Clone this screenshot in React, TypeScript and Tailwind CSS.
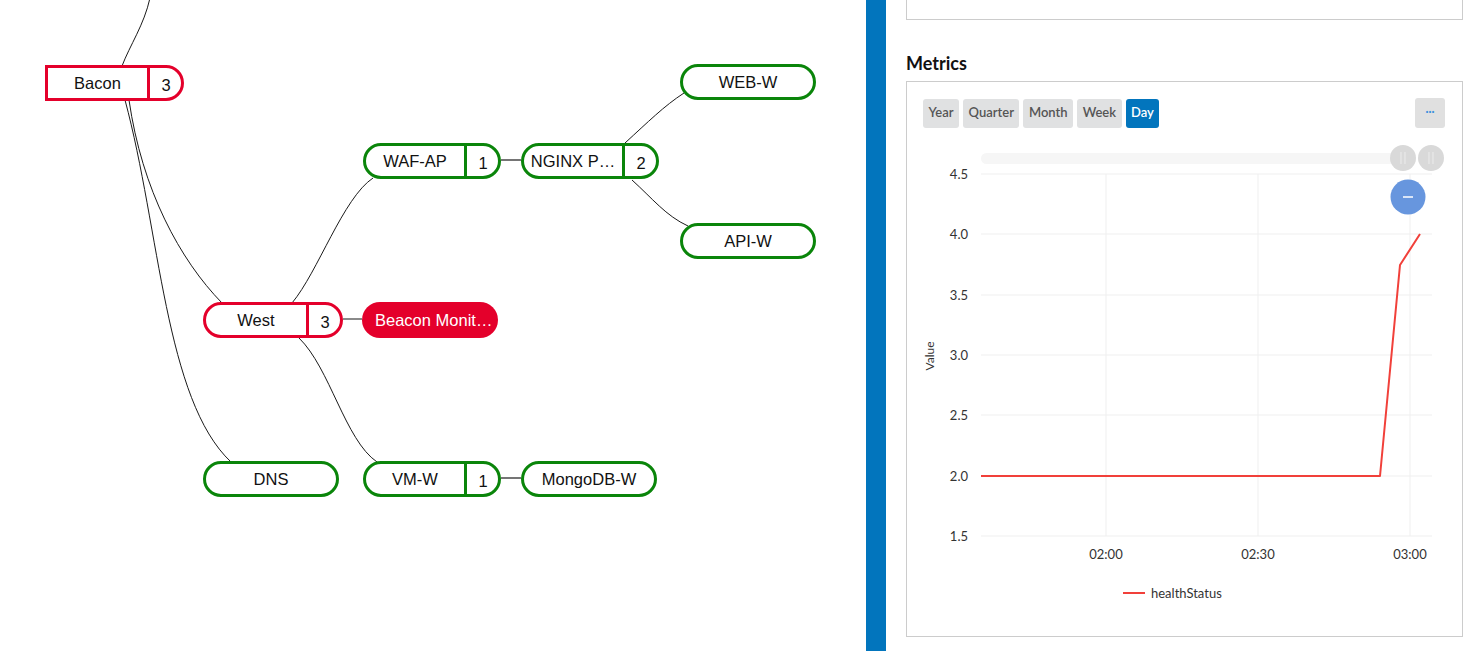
import React from "react";

type NodeDef = {
  label: string;
  count?: number;
  x: number;
  y: number;
  w: number;
  tone: "red" | "green" | "solid";
  square?: boolean;
};

const NODES: NodeDef[] = [
  { label: "Bacon", count: 3, x: 45, y: 65, w: 139, tone: "red", square: true },
  { label: "WEB-W", x: 680, y: 64, w: 136, tone: "green" },
  { label: "WAF-AP", count: 1, x: 363, y: 143, w: 138, tone: "green" },
  { label: "NGINX P…", count: 2, x: 521, y: 143, w: 138, tone: "green" },
  { label: "API-W", x: 680, y: 223, w: 136, tone: "green" },
  { label: "West", count: 3, x: 203, y: 302, w: 140, tone: "red" },
  { label: "Beacon Monit…", x: 362, y: 302, w: 136, tone: "solid" },
  { label: "DNS", x: 203, y: 461, w: 136, tone: "green" },
  { label: "VM-W", count: 1, x: 363, y: 461, w: 138, tone: "green" },
  { label: "MongoDB-W", x: 521, y: 461, w: 136, tone: "green" },
];

// edges of the topology, drawn under the nodes
const CURVES = [
  "M 150 -2 C 144 25, 130 45, 122 66",
  "M 129 100 C 142 190, 180 260, 222 303",
  "M 125 100 C 160 230, 165 400, 231 462",
  "M 292 303 C 318 272, 343 198, 373 178",
  "M 299 338 C 330 368, 345 440, 377 462",
  "M 625 143 C 648 122, 664 106, 684 93",
  "M 632 180 C 652 198, 666 216, 688 226",
];

const STRAIGHT = [
  { x1: 501, y1: 160, x2: 521, y2: 160, gray: false },
  { x1: 501, y1: 478, x2: 521, y2: 478, gray: false },
  { x1: 343, y1: 319, x2: 362, y2: 319, gray: true },
];

function TopoNode({ n }: { n: NodeDef }) {
  const base = "absolute flex h-[36px] font-['Liberation_Sans',Arial,sans-serif] text-[16.5px] leading-none";
  if (n.tone === "solid") {
    return (
      <div
        className={`${base} items-center rounded-full bg-[#e4002b] pl-[13px] pt-[1px] text-white`}
        style={{ left: n.x, top: n.y, width: n.w }}
      >
        <span className="whitespace-nowrap">{n.label}</span>
      </div>
    );
  }
  const red = n.tone === "red";
  return (
    <div
      className={`${base} items-stretch border-[3px] bg-white text-[#111] ${red ? "border-[#e4002b]" : "border-[#0a850a]"} ${n.square ? "rounded-r-full" : "rounded-full"}`}
      style={{ left: n.x, top: n.y, width: n.w }}
    >
      <div className="flex flex-1 items-center justify-center whitespace-nowrap pt-[1px]">{n.label}</div>
      {n.count !== undefined && (
        <div
          className={`flex w-[34px] items-center justify-center border-l-[3px] pt-[4px] pl-[1px] ${red ? "border-[#e4002b]" : "border-[#0a850a]"}`}
        >
          {n.count}
        </div>
      )}
    </div>
  );
}

const RANGES = ["Year", "Quarter", "Month", "Week", "Day"];
const Y_TICKS = [
  { v: "4.5", y: 46 },
  { v: "4.0", y: 106 },
  { v: "3.5", y: 167 },
  { v: "3.0", y: 227 },
  { v: "2.5", y: 287 },
  { v: "2.0", y: 348 },
  { v: "1.5", y: 408 },
];
const X_TICKS = [
  { v: "02:00", x: 199 },
  { v: "02:30", x: 351 },
  { v: "03:00", x: 503 },
];

function MetricsChart() {
  return (
    <svg width={555} height={508} className="block font-['Lato',sans-serif]">
      {/* zoom slider */}
      <rect x={74} y={25} width={420} height={11} rx={5.5} fill="#f6f6f6" />
      {[496, 524].map((cx) => (
        <g key={cx}>
          <circle cx={cx} cy={30} r={13} fill="#d9d9d9" />
          <line x1={cx - 2} y1={24} x2={cx - 2} y2={36} stroke="#ececec" strokeWidth={1} />
          <line x1={cx + 2} y1={24} x2={cx + 2} y2={36} stroke="#ececec" strokeWidth={1} />
        </g>
      ))}

      {/* grid */}
      {Y_TICKS.map((t) => (
        <line key={t.v} x1={74} y1={t.y} x2={525} y2={t.y} stroke="#efefef" />
      ))}
      {X_TICKS.map((t) => (
        <line key={t.v} x1={t.x} y1={46} x2={t.x} y2={408} stroke="#efefef" />
      ))}

      {/* reset zoom */}
      <circle cx={501} cy={69} r={17.5} fill="#6796de" />
      <line x1={496} y1={69} x2={506} y2={69} stroke="#fff" strokeWidth={1.5} />

      {/* axes labels */}
      {Y_TICKS.map((t) => (
        <text key={t.v} x={61} y={t.y + 4.5} textAnchor="end" fontSize={13} fill="#333">
          {t.v}
        </text>
      ))}
      {X_TICKS.map((t) => (
        <text key={t.v} x={t.x} y={431} textAnchor="middle" fontSize={13} fill="#333">
          {t.v}
        </text>
      ))}
      <text x={27} y={228} transform="rotate(-90 27 228)" textAnchor="middle" fontSize={12} fill="#333">
        Value
      </text>

      {/* series */}
      <polyline
        points="74,348 473,348 493,137 513,106"
        fill="none"
        stroke="#f1403a"
        strokeWidth={2}
        strokeLinejoin="round"
      />

      {/* legend */}
      <line x1={216} y1={465} x2={238} y2={465} stroke="#f1403a" strokeWidth={2} />
      <text x={244} y={469.5} fontSize={13} fill="#333">
        healthStatus
      </text>
    </svg>
  );
}

export default function App() {
  return (
    <div className="flex h-[651px] w-[1476px] overflow-hidden bg-white">
      {/* topology canvas */}
      <div className="relative h-full w-[866px] shrink-0 overflow-hidden bg-white">
        <svg className="absolute inset-0" width={866} height={651}>
          {CURVES.map((d) => (
            <path key={d} d={d} fill="none" stroke="#1a1a1a" strokeWidth={1} />
          ))}
          {STRAIGHT.map((l, i) => (
            <line
              key={i}
              x1={l.x1}
              y1={l.y1}
              x2={l.x2}
              y2={l.y2}
              stroke={l.gray ? "#8a8a8a" : "#1a1a1a"}
              strokeWidth={l.gray ? 2 : 1.2}
            />
          ))}
        </svg>
        {NODES.map((n) => (
          <TopoNode key={n.label} n={n} />
        ))}
      </div>

      {/* splitter */}
      <div className="h-full w-[20px] shrink-0 bg-[#0275bd] shadow-[-2px_0_4px_rgba(0,0,0,0.12)]" />

      {/* details panel */}
      <div className="flex-1 bg-white pl-[20px] pr-[13px] font-['Lato',sans-serif]">
        <div className="h-[20px] border border-t-0 border-[#cccccc]" />

        <h2 className="mt-[31px] h-[24px] text-[18px] font-bold leading-[24px] text-[#111]">Metrics</h2>

        <div className="mt-[6px] h-[556px] border border-[#cccccc]">
          <div className="flex items-center justify-between px-4 pt-4">
            <div className="flex gap-[4px]">
              {RANGES.map((r) => (
                <button
                  key={r}
                  className={`h-[29px] rounded-[3px] px-[5.5px] text-[13px] font-semibold ${
                    r === "Day" ? "bg-[#0275bd] text-white" : "bg-[#e0e1e2] text-[#555]"
                  }`}
                >
                  {r}
                </button>
              ))}
            </div>
            <button className="mr-[1px] flex h-[30px] w-[30px] items-center justify-center rounded-[3px] bg-[#e0e0e0] pb-[4px] text-[11px] font-bold text-[#3b8ede]">
              ···
            </button>
          </div>
          <MetricsChart />
        </div>
      </div>
    </div>
  );
}
